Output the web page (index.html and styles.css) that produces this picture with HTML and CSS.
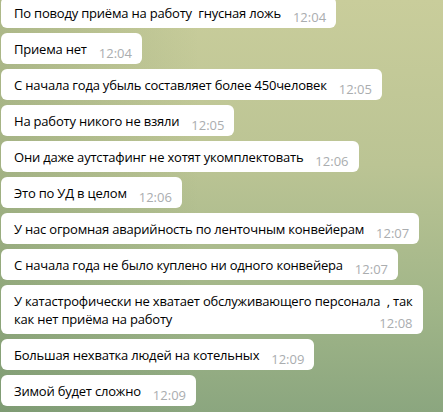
FILE: index.html
```html
<!DOCTYPE html>
<html lang="ru">
<head>
    <meta charset="UTF-8">
    <meta name="viewport" content="width=device-width, initial-scale=1.0">
    <title>Чат</title>
    <link rel="stylesheet" href="styles.css">
</head>
<body>
    <div class="chat">
        <div class="msg">По поводу приёма на работу &nbsp;гнусная ложь<span class="time">12:04</span></div>
        <div class="msg">Приема нет<span class="time">12:04</span></div>
        <div class="msg">С начала года убыль составляет более 450человек<span class="time">12:05</span></div>
        <div class="msg">На работу никого не взяли<span class="time">12:05</span></div>
        <div class="msg">Они даже аутстафинг не хотят укомплектовать<span class="time">12:06</span></div>
        <div class="msg">Это по УД в целом<span class="time">12:06</span></div>
        <div class="msg">У нас огромная аварийность по ленточным конвейерам<span class="time">12:07</span></div>
        <div class="msg">С начала года не было куплено ни одного конвейера<span class="time">12:07</span></div>
        <div class="msg">У катастрофически не хватает обслуживающего персонала &nbsp;, так<br>как нет приёма на работу<span class="time">12:08</span></div>
        <div class="msg">Большая нехватка людей на котельных<span class="time">12:09</span></div>
        <div class="msg">Зимой будет сложно<span class="time">12:09</span></div>
    </div>
</body>
</html>
```

FILE: styles.css
```css
body {
    margin: 0;
    height: 412px;
    overflow: hidden;
    font-family: 'Open Sans', 'Noto Sans', sans-serif;
    background:
        linear-gradient(to right, rgba(80, 115, 75, 0.22), rgba(80, 115, 75, 0) 45%),
        linear-gradient(to bottom, #c9cd9b 0%, #bbc494 40%, #a0b588 75%, #8ba67f 100%);
}
.chat {
    display: flex;
    flex-direction: column;
    align-items: flex-start;
    gap: 5px;
    margin-top: -3px;
    padding-left: 1px;
}
.msg {
    display: inline-block;
    background: #fff;
    color: #000;
    font-size: 13px;
    line-height: 18px;
    letter-spacing: -0.2px;
    padding: 7px 10px 6px 13px;
    border-radius: 6px;
    white-space: nowrap;
}
.time {
    float: right;
    margin: 4px 0 -4px 12px;
    font-size: 13px;
    line-height: 18px;
    letter-spacing: 0;
    color: #aaadaf;
}
```
